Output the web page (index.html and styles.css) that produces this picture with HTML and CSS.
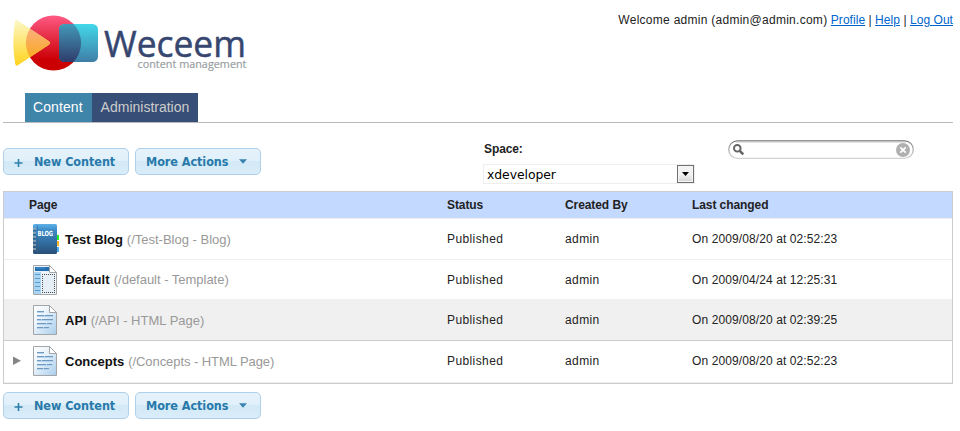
FILE: index.html
```html
<!DOCTYPE html>
<html lang="en">
<head>
<meta charset="utf-8">
<title>Weceem content management</title>
<link rel="stylesheet" href="styles.css">
</head>
<body>
<svg class="defs" width="0" height="0" aria-hidden="true">
  <defs>
    <linearGradient id="paper" x1="0" y1="0" x2="1" y2="1"><stop offset="0" stop-color="#fff"/><stop offset=".35" stop-color="#edf5fb"/><stop offset="1" stop-color="#a9cdec"/></linearGradient>
    <linearGradient id="book" x1="0" y1="0" x2="0" y2="1"><stop offset="0" stop-color="#5eb2e8"/><stop offset=".2" stop-color="#3c8cc8"/><stop offset="1" stop-color="#285078"/></linearGradient>
    <symbol id="doc" viewBox="0 0 24 30">
      <path d="M.5.5H16.500L23.500 7.500V29.500H.5Z" fill="url(#paper)" stroke="#a3a6a8"/>
      <path d="M16.500.5V7.500H23.500Z" fill="#fff" stroke="#a3a6a8"/>
      <path d="M4 7h7M4 11h16M4 15h16M4 19h16M4 23h12" stroke="#b4d3ee" stroke-width="2"/>
      <path d="M4 6.500h7M4 10.500h7m1 0h8M4 14.500h4m1 0h11M4 18.500h9m1 0h5M4 22.500h6m1 0h5" stroke="#7398be" stroke-width="1"/>
    </symbol>
  </defs>
</svg>

<header class="header">
  <svg class="logo" width="260" height="80" viewBox="0 0 260 80">
    <defs>
      <linearGradient id="red" x1="0" y1="0" x2="0" y2="1"><stop offset="0" stop-color="#ff5a84"/><stop offset=".8" stop-color="#cb0005"/><stop offset="1" stop-color="#cb0000"/></linearGradient>
      <linearGradient id="teal" x1="0" y1="0" x2="0" y2="1"><stop offset="0" stop-color="#42d8ea"/><stop offset="1" stop-color="#3f7ea6"/></linearGradient>
      <linearGradient id="navy" gradientUnits="userSpaceOnUse" x1="0" y1="24" x2="0" y2="62"><stop offset="0" stop-color="#4399b9"/><stop offset="1" stop-color="#2f3c6b"/></linearGradient>
      <linearGradient id="yellow" gradientUnits="userSpaceOnUse" x1="0" y1="19" x2="0" y2="66"><stop offset="0" stop-color="#fcf8c8"/><stop offset="1" stop-color="#ffd31c"/></linearGradient>
      <linearGradient id="orange" gradientUnits="userSpaceOnUse" x1="0" y1="24" x2="0" y2="60"><stop offset="0" stop-color="#fcaf8b"/><stop offset="1" stop-color="#f8ab1a"/></linearGradient>
      <clipPath id="disc"><circle cx="53.500" cy="43" r="27.600"/></clipPath>
    </defs>
    <circle cx="53.500" cy="43" r="27.600" fill="url(#red)"/>
    <rect x="59" y="24" width="39" height="38" rx="5.500" fill="url(#teal)"/>
    <path d="M16.800 20L48.500 41Q51.500 43 48.500 45L17.500 65.500Q15.700 66.500 15.200 64Q11.500 43 15 21.500Q15.400 19.200 16.800 20Z" fill="url(#yellow)"/>
    <g clip-path="url(#disc)">
      <rect x="59" y="24" width="39" height="38" rx="5.500" fill="url(#navy)"/>
      <path d="M16.800 20L48.500 41Q51.500 43 48.500 45L17.500 65.500Q15.700 66.500 15.200 64Q11.500 43 15 21.500Z" fill="url(#orange)"/>
    </g>
    <text class="logo-name" x="104" y="57" textLength="142" lengthAdjust="spacingAndGlyphs">Weceem</text>
    <text class="logo-sub" x="137.500" y="68" textLength="109" lengthAdjust="spacingAndGlyphs">content management</text>
  </svg>
  <div class="account"><span class="who">Welcome admin (admin@admin.com)</span> <a href="#">Profile</a> | <a href="#">Help</a> | <a href="#">Log Out</a></div>
</header>

<nav class="tabs">
  <a class="tab active" href="#">Content</a>
  <a class="tab admin" href="#">Administration</a>
</nav>

<div class="toolbar">
  <div class="buttons">
    <button class="btn"><svg class="plus" width="9" height="9"><path d="M4.500 1v8M.5 5h8" stroke="#2e80ad" stroke-width="1.600"/></svg><span>New Content</span></button>
    <button class="btn"><span>More Actions</span><svg class="caret" width="8" height="5"><path d="M0 .3h8L4 4.800Z" fill="#3983b0"/></svg></button>
  </div>
  <div class="space">
    <label>Space:</label>
    <div class="select"><span>xdeveloper</span><i class="drop"><svg width="7" height="4"><path d="M0 0h7L3.500 4Z"/></svg></i></div>
  </div>
  <div class="search">
    <svg width="186" height="20" viewBox="0 0 186 20">
      <defs><linearGradient id="rim" x1="0" y1="0" x2="0" y2="1"><stop offset="0" stop-color="#747474"/><stop offset=".3" stop-color="#a5a5a5"/><stop offset="1" stop-color="#d4d4d4"/></linearGradient></defs>
      <rect x=".7" y=".8" width="184.600" height="17.600" rx="8.800" fill="#fff" stroke="url(#rim)" stroke-width="1.300"/>
      <path d="M8 2.300H178" stroke="#ddd"/>
      <circle cx="9.300" cy="8.300" r="3.300" fill="none" stroke="#646464" stroke-width="1.900"/>
      <path d="M11.800 10.800L15.300 14.300" stroke="#646464" stroke-width="2.600"/>
      <circle cx="175" cy="10" r="7" fill="#b0b0b0"/>
      <path d="M172.300 7.300l5.400 5.400m0-5.400l-5.400 5.400" stroke="#fff" stroke-width="1.700"/>
    </svg>
  </div>
</div>

<section class="table">
  <div class="row head"><span class="page">Page</span><span>Status</span><span>Created By</span><span>Last changed</span></div>
  <div class="row">
    <div class="item">
      <svg class="icon" width="28" height="30" viewBox="0 0 28 30">
        <path d="M23 11h3v5h-3z" fill="#28f01e"/><path d="M23 17h3v5h-3z" fill="#ffb52e"/><path d="M23 23h3v5h-3z" fill="#4ba8ec"/>
        <rect x="0" width="24" height="30" rx="1.500" fill="url(#book)"/>
        <path d="M4.500 1v28" stroke="#36658d" opacity=".5"/>
        <path d="M0 5.500h3M0 9.500h3M0 13.500h3M0 17.500h3M0 21.500h3M0 25.500h3" stroke="#34526d" stroke-width="2"/>
        <path d="M0 5h3M0 9h3M0 13h3M0 17h3M0 21h3M0 25h3" stroke="#d6dde2" stroke-width="1"/>
        <text class="blog" x="4.500" y="11.800" textLength="15.500" lengthAdjust="spacingAndGlyphs">BLOG</text>
      </svg>
      <b class="n1">Test Blog</b><em class="p1">(/Test-Blog - Blog)</em>
    </div>
    <span class="status">Published</span><span class="by">admin</span><span class="date">On 2009/08/20 at 02:52:23</span>
  </div>
  <div class="row second">
    <div class="item">
      <svg class="icon" width="28" height="30" viewBox="0 0 28 30">
        <path d="M.5.5H16.500L23.500 7.500V29.500H.5Z" fill="#f2f6f9" stroke="#a3a6a8"/>
        <path d="M1 7h7v22H1z" fill="#abd4f3"/><path d="M1 1h15v6H1z" fill="#e7f0f8"/>
        <path d="M2 2h14v4H2z" fill="#236db1"/><path d="M3 3h9" stroke="#4e98d4"/>
        <path d="M2 9.500h5M2 13.500h5M2 17.500h5M2 21.500h5M2 25.500h5" stroke="#589bcf"/>
        <path d="M16.500.5V7.500H23.500Z" fill="#fff" stroke="#a3a6a8"/>
        <path d="M9 9h13v19H9z" fill="#e6eef6"/>
        <path d="M9 9.500h13M9 27.500h13M9.500 9v19M21.500 9v19" stroke="#454d54" stroke-dasharray="1 1"/>
      </svg>
      <b class="n2">Default</b><em class="p2">(/default - Template)</em>
    </div>
    <span class="status">Published</span><span class="by">admin</span><span class="date">On 2009/04/24 at 12:25:31</span>
  </div>
  <div class="row shaded">
    <div class="item"><svg class="icon doc" width="28" height="30"><use href="#doc" width="24" height="30"/></svg><b>API</b><em class="p3">(/API - HTML Page)</em></div>
    <span class="status">Published</span><span class="by">admin</span><span class="date">On 2009/08/20 at 02:39:25</span>
  </div>
  <div class="row last">
    <div class="item expandable"><svg class="expand" width="8" height="10"><path d="M0 .5L8 4.800L0 9Z" fill="#858585"/></svg><svg class="icon doc" width="28" height="30"><use href="#doc" width="24" height="30"/></svg><b>Concepts</b><em class="p4">(/Concepts - HTML Page)</em></div>
    <span class="status">Published</span><span class="by">admin</span><span class="date">On 2009/08/20 at 02:52:23</span>
  </div>
</section>

<div class="buttons bottom">
  <button class="btn"><svg class="plus" width="9" height="9"><path d="M4.500 1v8M.5 5h8" stroke="#2e80ad" stroke-width="1.600"/></svg><span>New Content</span></button>
  <button class="btn"><span>More Actions</span><svg class="caret" width="8" height="5"><path d="M0 .3h8L4 4.800Z" fill="#3983b0"/></svg></button>
</div>
</body>
</html>
```
FILE: styles.css
```css
* { box-sizing: border-box; }
body {
  margin: 0;
  padding: 0 7px 0 3px;
  height: 431px;
  overflow: hidden;
  background: #fff;
  color: #222;
  font: 12px/16px "Liberation Sans", Arial, sans-serif;
}
svg { display: block; flex: none; }
.defs { position: absolute; }

.header { display: flex; justify-content: space-between; height: 93px; }
.logo { margin-left: -3px; overflow: visible; }
.logo-name { font: 37px "Open Sans", sans-serif; fill: #36466f; stroke: #36466f; stroke-width: .5px; }
.logo-sub { font: 11.5px "Open Sans", sans-serif; fill: #989ea2; stroke: #989ea2; stroke-width: .2px; }
.account { padding-top: 12px; white-space: nowrap; letter-spacing: .05px; }
.who { letter-spacing: .27px; }
.account a { color: #06c; }

.tabs { display: flex; height: 30px; padding-left: 22px; border-bottom: 1px solid #bbb; }
.tab {
  width: 67px;
  padding-left: 8px;
  background: #3f84a9;
  color: #fff;
  font-size: 14px;
  line-height: 28px;
  letter-spacing: .1px;
  text-decoration: none;
}
.tab.admin { width: 106px; padding-left: 8.6px; background: #374e76; color: #ccc; letter-spacing: 0; }

.toolbar { display: flex; height: 68px; }
.buttons { display: flex; gap: 6px; padding-top: 25px; }
.btn {
  display: flex;
  align-items: center;
  width: 126px;
  height: 27px;
  padding: 1px 0 0 10px;
  border: 1px solid #aed0ea;
  border-radius: 5px;
  background: linear-gradient(#e6f2fb 0%, #e0f0fa 46%, #d3e9f6 50%, #d9ecf9 100%);
  color: #2779aa;
  font: bold 12.5px/16px "DejaVu Sans Condensed", "DejaVu Sans", sans-serif;
  letter-spacing: -.05px;
  white-space: nowrap;
}
.plus { margin-right: 11px; }
.caret { margin: -1px 0 0 11px; }
.space { width: 211px; margin-left: 222px; padding-top: 17px; }
.space label { display: block; padding-left: 1px; font-weight: bold; line-height: 18px; letter-spacing: -.1px; }
.select {
  display: flex;
  justify-content: space-between;
  align-items: center;
  width: 212px;
  height: 20px;
  margin-top: 6px;
  padding-left: 3px;
  border: 1px solid #eee;
  color: #000;
  font: 12.4px/18px "DejaVu Sans", sans-serif;
  letter-spacing: -.05px;
}
.select span { padding-top: 1px; }
.drop {
  display: flex;
  align-items: center;
  justify-content: center;
  width: 17px;
  height: 18px;
  border: 1px solid #707070;
  background: linear-gradient(#f3f3f3 50%, #d4d4d4);
  box-shadow: inset 0 0 0 1px #f5f5f5;
}
.search { margin: 17px 0 0 34px; }

.table { height: 193px; border: 1px solid #ccc; }
.row {
  display: grid;
  grid-template-columns: 443px 118px 127px 1fr;
  align-items: center;
  height: 41px;
  border-bottom: 1px solid #eee;
}
.head { height: 27px; background: #c3d9ff; font-weight: bold; letter-spacing: -.08px; border-color: #eee; }
.head .page { padding-left: 25px; }
.second { height: 40px; border-color: #f0f0f0; }
.shaded { background: #f0f0f0; border-color: #ccc; }
.last { height: 42px; padding-bottom: 1px; }
.status { letter-spacing: .4px; }
.by { letter-spacing: .4px; }
.date { letter-spacing: .1px; }
.item { display: flex; align-items: center; padding-left: 29px; font-size: 13px; white-space: nowrap; }
.expandable { padding-left: 9px; }
.expand { margin-right: 12px; }
.icon { margin-right: 4px; }
.item b { padding-top: 1px; color: #111; }
.item em { padding-top: 1px; margin-left: 4px; color: #999; font-style: normal; }
.n1 { letter-spacing: -.05px; }
.n2 { letter-spacing: .1px; }
.p1, .p3 { letter-spacing: 0; }
.p2 { letter-spacing: -.02px; }
.p4 { letter-spacing: -.07px; }
.blog { font: bold 7px "DejaVu Sans", sans-serif; fill: #fff; }

.bottom { padding-top: 8px; }
```
